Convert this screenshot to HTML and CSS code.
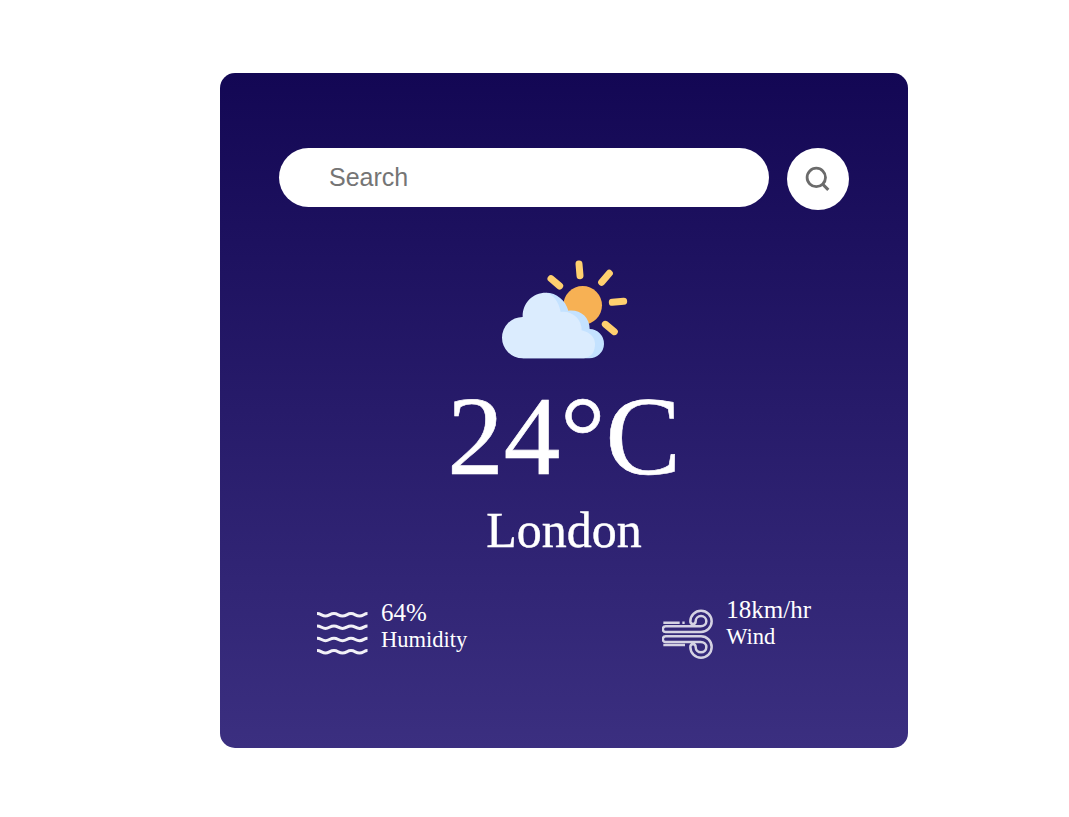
FILE: index.html
```html
<!DOCTYPE html>
<html lang="en">
<head>
<meta charset="utf-8">
<title>Weather</title>
<link rel="stylesheet" href="styles.css">
</head>
<body>
<main class="card">
  <div class="search">
    <input class="search-input" type="text" placeholder="Search" aria-label="Search">
    <button class="search-button" aria-label="Search">
      <svg width="26" height="26" viewBox="0 0 26 26" fill="none" stroke="#6b6b6b">
        <circle cx="11.3" cy="11.4" r="9.2" stroke-width="2.8"/>
        <path d="M17.500 18 L23.300 23.800" stroke-width="3.100"/>
      </svg>
    </button>
  </div>
  <section class="weather">
    <svg class="weather-icon" viewBox="0 0 450 360">
      <circle cx="278" cy="166" r="58" fill="#f7b154"/>
      <g stroke="#ffd06f" stroke-width="21" stroke-linecap="round">
        <path d="M267 42 L270 77"/>
        <path d="M183 86 L209 108"/>
        <path d="M358 70 L335 97"/>
        <path d="M401 154 L367 157"/>
        <path d="M346 223 L373 245"/>
      </g>
      <path fill="#c4e2ff" d="M98 325 L297 325 A44 44 0 0 0 299 237 C299 201 271 178 235 182 C227 151 200 128 168 128 Z"/>
      <path fill="#dbecfe" d="M98 325 A62 62 0 0 1 98 201 C97 160 127 128 168 128 C190 132 207 156 212 186 C246 181 275 207 275 241 C300 247 315 262 315 282 C315 307 303 322 282 325 Z"/>
    </svg>
    <h1 class="temperature">24°C</h1>
    <h2 class="city">London</h2>
  </section>
  <section class="details">
    <div class="detail humidity">
      <svg class="detail-icon" viewBox="0 -.6 52 52" fill="none" stroke="#f2f1f7" stroke-width="3">
        <path d="M0 6 C4 6 5 8.500 8.500 8.500 S13 6 17 6 S21.500 8.500 25.500 8.500 S30 6 34 6 S38.500 8.500 42.500 8.500 S47 6 50.500 6"/>
        <path d="M0 18.300 C4 18.300 5 20.800 8.500 20.800 S13 18.300 17 18.300 S21.500 20.800 25.500 20.800 S30 18.300 34 18.300 S38.500 20.800 42.500 20.800 S47 18.300 50.500 18.300"/>
        <path d="M0 30.600 C4 30.600 5 33.100 8.500 33.100 S13 30.600 17 30.600 S21.500 33.100 25.500 33.100 S30 30.600 34 30.600 S38.500 33.100 42.500 33.100 S47 30.600 50.500 30.600"/>
        <path d="M0 43 C4 43 5 45.500 8.500 45.500 S13 43 17 43 S21.500 45.500 25.500 45.500 S30 43 34 43 S38.500 45.500 42.500 45.500 S47 43 50.500 43"/>
      </svg>
      <div>
        <p class="value">64%</p>
        <p class="label">Humidity</p>
      </div>
    </div>
    <div class="detail wind">
      <svg class="detail-icon" viewBox="0 0 156 156" fill="none" stroke="#d5d2e3" stroke-width="7.500">
        <path d="M4 44 H53 M61 44 H68 M4 111 H69"/>
        <path d="M117 72 H11 A8.500 8.500 0 0 1 11 55 H116 C126 55 133 48 133 40 A16 16 0 0 0 101 40 A8 8 0 0 1 85 40 A32 32 0 1 1 117 72"/>
        <path d="M117 85 H11 A8.500 8.500 0 0 0 11 102 H116 C126 102 133 109 133 117 A16 16 0 0 1 101 117 A8 8 0 0 0 85 117 A32 32 0 1 0 117 85"/>
      </svg>
      <div>
        <p class="value">18km/hr</p>
        <p class="label">Wind</p>
      </div>
    </div>
  </section>
</main>
</body>
</html>
```
FILE: styles.css
```css
* {
  box-sizing: border-box;
  margin: 0;
  padding: 0;
}

body {
  background: #fff;
  font-family: "Liberation Serif", "Times New Roman", serif;
}

.card {
  width: 688px;
  height: 675px;
  margin: 73px 0 0 220px;
  padding: 75px 59px 0;
  border-radius: 15px;
  background: linear-gradient(180deg, #130754, #3b2f80);
  color: #fff;
}

.search {
  display: flex;
  align-items: flex-start;
  justify-content: space-between;
}

.search-input {
  width: 490px;
  height: 59px;
  padding: 0 50px;
  border: 0;
  border-radius: 30px;
  outline: 0;
  background: #fff;
  font: 25px "Liberation Sans", Arial, sans-serif;
}

.search-input::placeholder {
  color: #757575;
}

.search-button {
  display: flex;
  align-items: center;
  justify-content: center;
  width: 62px;
  height: 62px;
  border: 0;
  border-radius: 50%;
  background: #fff;
}

.weather {
  display: flex;
  flex-direction: column;
  align-items: center;
  margin-top: 40px;
}

.weather-icon {
  width: 150px;
  height: 120px;
  margin-left: 2px;
}

.temperature {
  margin-top: 1px;
  font-size: 113px;
  font-weight: 400;
  line-height: 130px;
  -webkit-text-stroke: 0.6px #fff;
}

.city {
  font-size: 50px;
  font-weight: 400;
  line-height: 58px;
  -webkit-text-stroke: 0.4px #fff;
}

.details {
  display: flex;
  align-items: flex-start;
  justify-content: space-between;
  margin-top: 37px;
  padding: 0 38px;
}

.detail {
  display: flex;
  align-items: flex-start;
  gap: 12px;
}

.humidity {
  padding-top: 3px;
}

.detail-icon {
  width: 52px;
  height: 52px;
  margin-top: 12px;
}

.humidity .detail-icon {
  margin-top: 8px;
}

.value {
  font-size: 25px;
  line-height: 28px;
}

.label {
  font-size: 22.5px;
  line-height: 26px;
}
```
